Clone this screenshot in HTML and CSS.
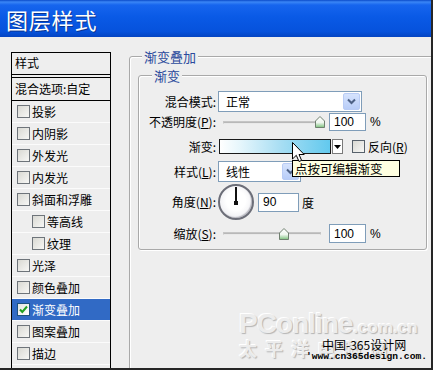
FILE: index.html
```html
<!DOCTYPE html>
<html lang="zh-CN">
<head>
<meta charset="utf-8">
<title>图层样式</title>
<link rel="stylesheet" href="styles.css">
</head>
<body>
<div class="window">
  <div class="titlebar"><span class="title">图层样式</span></div>
  <div class="body">
    <div class="stylelist">
      <div class="list-head">样式</div>
      <div class="list-blend">混合选项:自定</div>
      <div class="item"><span class="cb"></span>投影</div>
      <div class="item"><span class="cb"></span>内阴影</div>
      <div class="item"><span class="cb"></span>外发光</div>
      <div class="item"><span class="cb"></span>内发光</div>
      <div class="item"><span class="cb"></span>斜面和浮雕</div>
      <div class="item sub"><span class="cb"></span>等高线</div>
      <div class="item sub"><span class="cb"></span>纹理</div>
      <div class="item"><span class="cb"></span>光泽</div>
      <div class="item"><span class="cb"></span>颜色叠加</div>
      <div class="item selected"><span class="cb checked"><svg width="11" height="11" viewBox="0 0 11 11"><path d="M2 5.5 L4.3 8 L9 2.5" fill="none" stroke="#21a121" stroke-width="2"/></svg></span>渐变叠加</div>
      <div class="item"><span class="cb"></span>图案叠加</div>
      <div class="item"><span class="cb"></span>描边</div>
      <div class="item last"></div>
    </div>
    <div class="main">
      <div class="group outer">
        <span class="legend">渐变叠加</span>
        <div class="group inner">
          <span class="legend">渐变</span>
          <div class="rows">
            <span class="lbl">混合模式:</span>
            <div class="ctl">
              <div class="select mode"><span class="sel-text">正常</span><span class="dd"><svg width="9" height="7" viewBox="0 0 9 7"><path d="M1 1.5 L4.5 5 L8 1.5" fill="none" stroke="#4d6185" stroke-width="2"/></svg></span></div>
            </div>

            <span class="lbl">不透明度(<u>P</u>):</span>
            <div class="ctl">
              <div class="slider"><span class="track"></span><span class="thumb" style="left:97px"><svg width="10" height="12" viewBox="0 0 10 12"><defs><linearGradient id="tg1" x1="0" y1="0" x2="0" y2="1"><stop offset="0" stop-color="#ffffff"/><stop offset="0.55" stop-color="#eef6ee"/><stop offset="1" stop-color="#7cc27c"/></linearGradient></defs><path d="M0.5 5 L5 0.5 L9.5 5 V11.5 H0.5 Z" fill="url(#tg1)" stroke="#6f7f6f"/></svg></span></div>
              <span class="num op">100</span><span class="unit">%</span>
            </div>

            <span class="lbl">渐变:</span>
            <div class="ctl">
              <span class="grad"></span><span class="grad-btn"><svg width="7" height="4" viewBox="0 0 7 4"><path d="M0 0 H7 L3.5 4 Z" fill="#000"/></svg></span>
              <span class="cb plain"></span><span class="cblbl">反向(<u>R</u>)</span>
            </div>

            <span class="lbl">样式(<u>L</u>):</span>
            <div class="ctl">
              <div class="select style"><span class="sel-text">线性</span><span class="dd"><svg width="9" height="7" viewBox="0 0 9 7"><path d="M1 1.5 L4.5 5 L8 1.5" fill="none" stroke="#4d6185" stroke-width="2"/></svg></span></div>
            </div>

            <span class="lbl">角度(<u>N</u>):</span>
            <div class="ctl">
              <span class="dial"></span>
              <span class="num ang">90</span><span class="unit deg">度</span>
            </div>

            <span class="lbl">缩放(<u>S</u>):</span>
            <div class="ctl">
              <div class="slider"><span class="track"></span><span class="thumb" style="left:61px"><svg width="10" height="12" viewBox="0 0 10 12"><defs><linearGradient id="tg2" x1="0" y1="0" x2="0" y2="1"><stop offset="0" stop-color="#ffffff"/><stop offset="0.55" stop-color="#eef6ee"/><stop offset="1" stop-color="#7cc27c"/></linearGradient></defs><path d="M0.5 5 L5 0.5 L9.5 5 V11.5 H0.5 Z" fill="url(#tg2)" stroke="#6f7f6f"/></svg></span></div>
              <span class="num sc">100</span><span class="unit">%</span>
            </div>
          </div>
        </div>
      </div>
    </div>
  </div>

  <div class="tooltip">点按可编辑渐变</div>
  <svg class="cursor" width="14" height="22" viewBox="0 0 14 22"><path d="M0.5 0.5 L0.5 17 L4.3 13.3 L7 19.5 L9.6 18.4 L7 12.5 L12.2 12.5 Z" fill="#fff" stroke="#000" stroke-linejoin="miter"/></svg>

  <div class="wm">
    <div class="wm-logo"><span class="wm-big">PConline</span><span class="wm-small">.com.cn</span></div>
    <div class="wm-cn">太 平 洋 电 脑 网</div>
  </div>
  <div class="site">
    <div class="site-cn">中国-365设计网</div>
    <div class="site-url">'www.cn365design.com.</div>
  </div>
</div>
</body>
</html>
```

FILE: styles.css
```css
* { box-sizing: border-box; }
html, body { margin: 0; padding: 0; }
body {
  width: 433px;
  height: 370px;
  overflow: hidden;
  background: #eeeeee;
  font-family: "Noto Sans CJK SC", "Liberation Sans", sans-serif;
  font-size: 12px;
  color: #000;
}
u { text-decoration: underline; text-underline-offset: 1px; }

.window {
  position: relative;
  width: 433px;
  height: 370px;
  background: #eeeeee;
  border-right: 2px solid #262626;
  border-bottom: 2px solid #262626;
  overflow: hidden;
  display: flex;
  flex-direction: column;
}

.titlebar {
  flex: none;
  height: 37px;
  display: flex;
  align-items: center;
  padding-left: 6px;
  background: linear-gradient(#0a4bc9 0, #3a86f6 2px, #1665ee 5px, #0a5ae6 45%, #0652dc 85%, #0444c2 100%);
}
.title {
  color: #fff;
  font-size: 22px;
  line-height: 1;
  letter-spacing: 0.8px;
  text-shadow: 1px 1px 0 #0a3590;
}

.body {
  flex: 1;
  min-height: 0;
  display: flex;
  padding-left: 11px;
  padding-top: 15px;
}

/* left style list */
.stylelist {
  flex: none;
  width: 100px;
  border-left: 1px solid #000;
  border-right: 1px solid #000;
  display: flex;
  flex-direction: column;
}
.list-head {
  height: 23px;
  border-top: 1px solid #000;
  border-bottom: 1px solid #000;
  padding-left: 3px;
  line-height: 20px;
}
.list-blend {
  margin-top: 2px;
  height: 24px;
  border-top: 1px solid #000;
  border-bottom: 1px solid #000;
  padding-left: 3px;
  line-height: 21px;
}
.item {
  height: 22px;
  flex: none;
  border-bottom: 1px solid #fbfbfb;
  display: flex;
  align-items: center;
  padding-left: 5px;
  white-space: nowrap;
}
.item.sub { padding-left: 20px; }
.item.last { flex: 1; border-bottom: 0; }
.item.selected { background: #316ac5; color: #fff; }

.cb {
  flex: none;
  width: 13px;
  height: 13px;
  margin-right: 2px;
  border: 1px solid #6e747a;
  background: linear-gradient(135deg, #d9d9d3, #f7f7f5);
  display: flex;
  align-items: center;
  justify-content: center;
}
.cb.checked { background: linear-gradient(135deg, #e4e4e0, #ffffff); border-color: #1c5180; }

/* right side */
.main {
  flex: none;
  margin-left: 18px;
  padding-top: 4px;
  width: 310px;
}
.group {
  border: 1px solid #a9a9a9;
  border-radius: 3px;
  box-shadow: inset 1px 1px 0 #fff, 1px 1px 0 #fff;
}
.legend {
  display: block;
  width: fit-content;
  height: 16px;
  line-height: 16px;
  margin-top: -8px;
  padding: 0 2px;
  background: #eeeeee;
  color: #2b4a9c;
  font-size: 13px;
}
.outer {
  width: 305px;
  height: 420px;
  padding-left: 8px;
}
.outer > .legend { margin-left: 4px; }
.inner {
  margin-top: 10px;
  width: 289px;
}
.inner > .legend { margin-left: 13px; }

.rows {
  display: grid;
  grid-template-columns: 77px 1fr;
  grid-template-rows: 21px 20px 29px 21px 40px 23px;
  column-gap: 2px;
  align-items: center;
  padding-top: 7px;
  padding-bottom: 4px;
}
.lbl {
  text-align: right;
  white-space: nowrap;
  line-height: 14px;
}
.ctl {
  display: flex;
  align-items: center;
  height: 100%;
}

.select {
  height: 21px;
  border: 1px solid #7f9db9;
  background: #fff;
  display: flex;
  align-items: center;
  justify-content: space-between;
  padding: 1px;
}
.select.mode { width: 144px; }
.select.style { width: 83px; }
.sel-text { padding-left: 6px; line-height: 14px; }
.dd {
  width: 17px;
  height: 17px;
  border: 1px solid #b9ccf5;
  border-radius: 2px;
  background: linear-gradient(#d6e3fd, #b8cdf8);
  display: flex;
  align-items: center;
  justify-content: center;
}

.slider {
  position: relative;
  width: 108px;
  height: 14px;
  display: flex;
  align-items: center;
}
.track {
  margin-left: 5px;
  width: 98px;
  height: 3px;
  border: 1px solid #c5c5c5;
  border-bottom-color: #e9e9e9;
  background: #b8b8b8;
}
.thumb {
  position: absolute;
  top: 1px;
  width: 10px;
  height: 12px;
  display: block;
  line-height: 0;
}

.num {
  margin-left: 3px;
  width: 37px;
  height: 19px;
  border: 1px solid #7f9db9;
  background: #fff;
  padding-left: 4px;
  display: flex;
  align-items: center;
  font-family: "Liberation Sans", "DejaVu Sans", sans-serif;
  font-size: 12px;
}
.num.op { height: 18px; }
.num.ang { margin-left: 4px; width: 41px; }
.unit {
  margin-left: 4px;
  font-family: "Liberation Sans", sans-serif;
  font-size: 12px;
}
.unit.deg { margin-left: 3px; font-family: "Noto Sans CJK SC", sans-serif; }

.grad {
  margin-left: 1px;
  width: 112px;
  height: 15px;
  border: 1px solid #1a1a1a;
  background: linear-gradient(90deg, #ffffff 0%, #e6f6fc 18%, #a8def3 55%, #62c9ee 100%);
}
.grad-btn {
  margin-left: 1px;
  width: 11px;
  height: 15px;
  border: 1px solid #7a7a7a;
  background: #fff;
  display: flex;
  align-items: center;
  justify-content: center;
}
.cb.plain { margin-left: 9px; margin-right: 0; border-color: #57616b; }
.cblbl { margin-left: 3px; white-space: nowrap; }

.dial {
  position: relative;
  width: 36px;
  height: 36px;
  border-radius: 50%;
  border: 2px solid #6c6e78;
  background: radial-gradient(circle at 50% 45%, #ffffff 40%, #e4e4ea 100%);
  box-shadow: inset -1px -1px 1px #b8b8c0;
}
.dial::before {
  content: "";
  position: absolute;
  left: 15px;
  top: 1px;
  width: 2px;
  height: 16px;
  background: #111;
}
.dial::after {
  content: "";
  position: absolute;
  left: 14px;
  top: 15px;
  width: 4px;
  height: 4px;
  background: #111;
}

/* overlays */
.tooltip {
  position: absolute;
  left: 292px;
  top: 160px;
  width: 108px;
  height: 17px;
  border: 1px solid #000;
  background: #ffffe1;
  padding-left: 2px;
  line-height: 15px;
  white-space: nowrap;
  font-size: 12.5px;
}
.cursor {
  position: absolute;
  left: 292px;
  top: 142px;
}

.wm {
  position: absolute;
  left: 239px;
  top: 311px;
  width: 186px;
  color: #ececec;
  text-shadow: 1px 1px 1px #b4b4b4, -1px -1px 0 #ffffff;
  white-space: nowrap;
}
.wm-logo {
  font-family: "Liberation Sans", sans-serif;
  font-weight: bold;
  line-height: 26px;
  height: 26px;
}
.wm-big { font-size: 28px; letter-spacing: -1px; }
.wm-small { font-size: 17px; margin-left: 1px; }
.wm-cn {
  font-size: 18px;
  font-weight: bold;
  line-height: 22px;
  letter-spacing: 2px;
}

.site {
  position: absolute;
  left: 306px;
  top: 337px;
  white-space: nowrap;
}
.site-cn {
  margin-left: 16px;
  font-size: 12px;
  line-height: 15px;
}
.site-url {
  font-family: "Liberation Mono", monospace;
  font-size: 9.6px;
  line-height: 10px;
  font-weight: bold;
}
```
